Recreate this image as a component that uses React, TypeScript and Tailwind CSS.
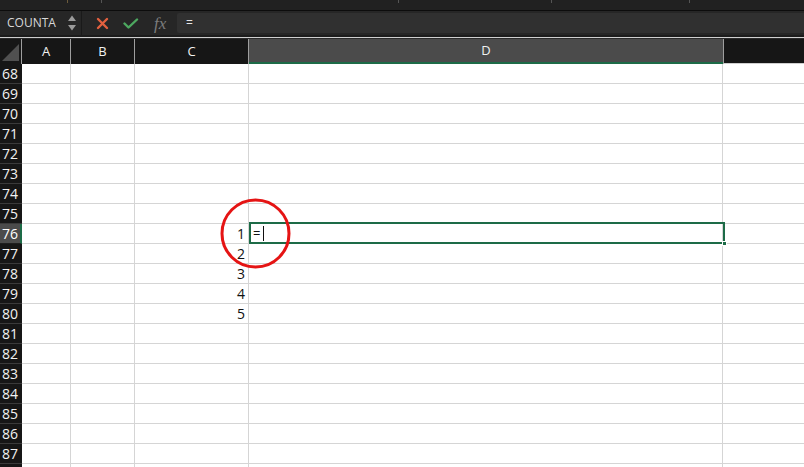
import React from "react";

const cols = [
  { key: "A", w: "w-[49px]" },
  { key: "B", w: "w-[64px]" },
  { key: "C", w: "w-[114px]" },
  { key: "D", w: "w-[474px]" },
];

const rows = Array.from({ length: 21 }, (_, i) => 68 + i);
const cValues: Record<number, string> = { 76: "1", 77: "2", 78: "3", 79: "4", 80: "5" };

export default function App() {
  return (
    <div
      className="w-[804px] h-[467px] overflow-hidden bg-white relative"
      style={{ fontFamily: '"Open Sans", "Liberation Sans", sans-serif' }}
    >
      {/* top strip */}
      <div className="h-[10px] bg-[#212121] relative">
        <div className="absolute left-[67px] top-0 w-[1px] h-[3px] bg-[#6b5a3a]" />
        <div className="absolute left-[101px] top-0 w-[1px] h-[3px] bg-[#555]" />
        <div className="absolute left-[398px] top-0 w-[1px] h-[3px] bg-[#555]" />
        <div className="absolute left-[551px] top-0 w-[1px] h-[3px] bg-[#555]" />
        <div className="absolute left-[689px] top-0 w-[1px] h-[3px] bg-[#555]" />
      </div>
      <div className="h-[1px] bg-[#0c0c0c]" />
      {/* formula bar */}
      <div className="h-[24px] bg-[#262626] flex items-center">
        <div className="w-[82px] h-full flex items-center pl-[7px] pr-[4px] border-r border-[#1a1a1a]">
          <span className="text-[12px] text-[#d8d8d8] flex-1">COUNTA</span>
          <svg width="10" height="20" viewBox="0 0 10 20">
            <path d="M1 8 L5 2.5 L9 8 Z" fill="#9a9a9a" />
            <path d="M1 12 L5 17.5 L9 12 Z" fill="#9a9a9a" />
          </svg>
        </div>
        <div className="w-[95px] h-full flex items-center">
          <svg width="13" height="13" viewBox="0 0 13 13" className="ml-[14px]">
            <path d="M2 2 L11 11 M11 2 L2 11" stroke="#e2603f" strokeWidth="2.4" strokeLinecap="round" />
          </svg>
          <svg width="16" height="13" viewBox="0 0 16 13" className="ml-[14px]">
            <path d="M1.5 6.5 L5.5 10.5 L14 2.5" stroke="#4da860" strokeWidth="2.4" fill="none" strokeLinecap="round" strokeLinejoin="round" />
          </svg>
          <span
            className="ml-[15px] text-[17px] italic text-[#7c7c7c] leading-none"
            style={{ fontFamily: '"Liberation Serif", "DejaVu Serif", serif' }}
          >
            fx
          </span>
        </div>
        <div className="flex-1 h-[20px] bg-[#303030] rounded-l-[2px] flex items-center pl-[9px]">
          <span className="text-[12px] text-[#e6e6e6]">=</span>
        </div>
      </div>
      <div className="h-[2px] bg-[#1c1c1c]" />
      <div className="h-[1px] bg-[#cfcfcf]" />
      <div className="h-[1px] bg-[#2a2a2a]" />
      {/* column header */}
      <div className="flex h-[25px] bg-[#161616]">
        <div className="w-[22px] h-full border-r border-[#9e9e9e] relative">
          <svg width="20" height="20" viewBox="0 0 20 20" className="absolute right-[1px] bottom-[2px]">
            <path d="M19 2 L19 19 L2 19 Z" fill="#505050" />
          </svg>
        </div>
        {cols.map((c) => (
          <div
            key={c.key}
            className={`${c.w} h-full flex items-center justify-center text-[13px] ${
              c.key === "D"
                ? "bg-[#4b4b4b] text-[#f0f0f0] border-b-2 border-[#1d6b47]"
                : "text-[#f2f2f2] border-r border-[#9e9e9e]"
            }`}
          >
            {c.key}
          </div>
        ))}
        <div className="flex-1 h-full border-l border-[#9e9e9e] border-b border-b-[#cfcfcf]" />
      </div>
      {/* rows */}
      {rows.map((r) => {
        const sel = r === 76;
        return (
          <div key={r} className="flex h-[20px]">
            <div
              className={`w-[22px] h-full flex items-center pl-[2px] text-[14px] border-b ${
                sel
                  ? "bg-[#4b4b4b] text-white border-b-[#1e1e1e] border-r-2 border-r-[#1d6b47]"
                  : "bg-[#161616] text-[#f2f2f2] border-[#3a3a3a]"
              }`}
            >
              {r < 88 ? r : ""}
            </div>
            {cols.map((c) => (
              <div
                key={c.key}
                className={`${c.w} h-full border-r border-b border-[#d5d5d5] flex items-center text-[14px] text-[#111] ${
                  c.key === "C" ? "justify-end pr-[3px]" : ""
                }`}
              >
                {c.key === "C" ? cValues[r] ?? "" : ""}
              </div>
            ))}
            <div className="flex-1 h-full border-b border-[#d5d5d5]" />
          </div>
        );
      })}
      {/* active cell */}
      <div className="absolute left-[249px] top-[222px] w-[476px] h-[22px] border-2 border-[#1d6b47] flex items-center pl-[2px]">
        <span className="text-[13px] text-[#111] leading-none">=</span>
        <span className="ml-[3px] w-[1px] h-[15px] bg-[#111]" />
        <div className="absolute right-[-4px] bottom-[-4px] w-[5px] h-[5px] bg-[#1d6b47] border border-white" />
      </div>
      {/* red circle annotation */}
      <svg className="absolute left-[219px] top-[198px]" width="74" height="72" viewBox="0 0 74 72">
        <circle cx="36.5" cy="35.5" r="33.5" fill="none" stroke="#e51414" strokeWidth="3" />
      </svg>
    </div>
  );
}
